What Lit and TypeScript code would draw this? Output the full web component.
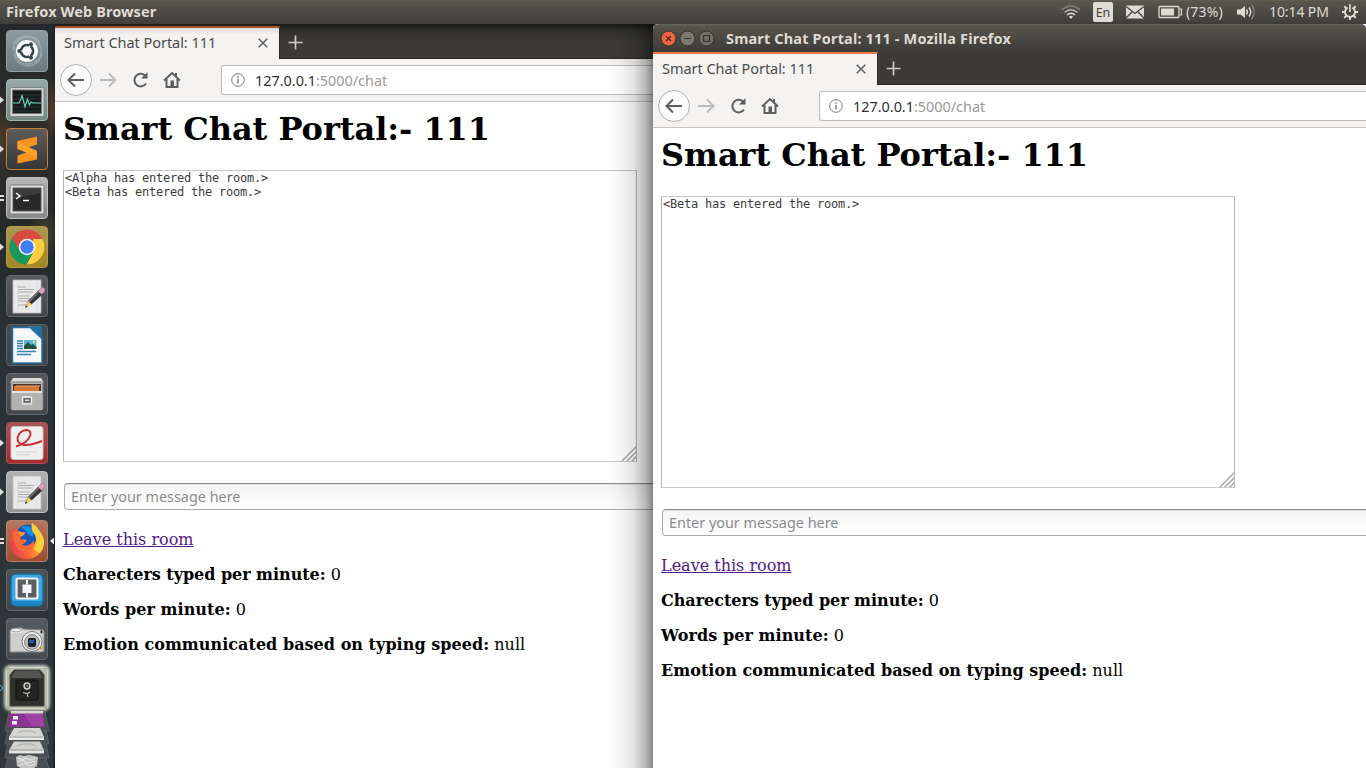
import { LitElement, html, css, svg, nothing } from "lit";
import { customElement, property } from "lit/decorators.js";

type Tile = { name: string; bg: string; edge: string; art: unknown; left?: "tri" | "dash"; right?: boolean };

const document_ = svg`
  <rect x="7" y="5" width="28" height="33" fill="#e9e9ea" stroke="#bdbdbd" stroke-width=".8"/>
  <path d="M12 5v33M31 5v33" stroke="#d5dbe8" stroke-width=".7"/>
  <path d="M12 12h8M12 14.5h16M12 17h15M12 21h12M12 23.500h14M12 26h10M12 30h9" stroke="#a5a5a8" stroke-width=".9"/>
  <path d="M19 32l3-6 11-11 4 4-11 10z" fill="#343434"/>
  <path d="M22 26l11-11 1.500 1.500-11 11z" fill="#686868"/>
  <path d="M19 33l3-7 4 3.500z" fill="#e8cf62"/><path d="M19 33l1.200-2.500 1.300 1.300z" fill="#222"/>
  <path d="M32 16l3-3q2-1 3.400.6t-.2 3.400l-2.500 2.500z" fill="#dda0bf" stroke="#8a6b7b" stroke-width=".5"/>`;

const tiles: Tile[] = [
  { name: "dash", bg: "linear-gradient(#8d9ba1,#6c7b82)", edge: "#93a0a5", art: svg`
    <g fill="none" stroke="#b3bdc1" stroke-opacity=".55" stroke-width="1.300">
      <path d="M7 21Q7 6 22 6q10 1 12 8M8 24q2 11 13 12 12 0 15-13M10 14q3-6 10-7 12 0 15 12 1 10-7 15M9 17q-1 11 7 16 8 3 15-3"/></g>
    <circle cx="21" cy="21" r="11" fill="#f9fafa"/>
    <circle cx="21" cy="21" r="6" fill="none" stroke="#35464e" stroke-width="2.700"/>
    <g stroke="#f9fafa" stroke-width="1.200"><path d="M21 21h-9M21 21l4.500-7.800M21 21l4.500 7.800"/></g><circle cx="21" cy="21" r="4.500" fill="#f9fafa"/>
    <g fill="#35464e"><circle cx="13.200" cy="21" r="2"/><circle cx="25" cy="14.200" r="2"/><circle cx="25" cy="27.800" r="2"/></g>` },
  { name: "monitor", bg: "linear-gradient(#96aaa7,#718883)", edge: "#a2b6b2", left: "tri", art: svg`
    <rect x="4" y="8.500" width="34" height="29" rx="1.500" fill="#d4d6d5" stroke="#808684"/>
    <rect x="6.500" y="11" width="29" height="23.500" fill="#171d1d" stroke="#777"/>
    <path d="M7 16h28M7 20h28M7 24h28M7 28h28M7 32h28" stroke="#354241" stroke-width=".7"/>
    <path d="M7 24h6l2-4 1-4 3 12 2.500-8 2 6 1.500-3 2 1h8" fill="none" stroke="#67d4b4" stroke-width="1.100"/>` },
  { name: "editor", bg: "linear-gradient(#5e5d5c,#343638)", edge: "#c78035", left: "tri", art: svg`
    <path d="M31 8.500v8L20 20l11 3v8.500L11.500 35.500v-8L22 24l-10.500-3v-8z" fill="#f7941e"/>
    <path d="M11.500 13.500v7.500L31 29v-6z" fill="#fba22b"/>` },
  { name: "terminal", bg: "linear-gradient(#b6b6b6,#8a8a8a)", edge: "#bdbdbd", left: "dash", art: svg`
    <rect x="4" y="8" width="34" height="29" rx="1.500" fill="#e2e2e2" stroke="#777"/>
    <rect x="7" y="11" width="28" height="23" fill="#292929" stroke="#555"/>
    <path d="M7 22l28-6v-5H7z" fill="#555" opacity=".45"/>
    <path d="M10 16l4 3-4 3M17 23.500h6" fill="none" stroke="#fff" stroke-width="1.500"/>` },
  { name: "chrome", bg: "linear-gradient(#aa9754,#a28723)", edge: "#b49c44", left: "tri", art: svg`
    <circle cx="21" cy="21" r="17.500" fill="#d84b40"/>
    <path d="M36.500 13A17.500 17.500 0 0 1 20.500 38.500L28 25l-1-12z" fill="#fbcd3f"/>
    <path d="M5.800 12.300A17.500 17.500 0 0 0 20.500 38.500L28 25l-14 0z" fill="#16985b"/>
    <circle cx="21" cy="21" r="8.300" fill="#f4f4f2"/><circle cx="21" cy="21" r="6.700" fill="#407ded"/>` },
  { name: "gedit", bg: "linear-gradient(#585c5f,#44484b)", edge: "#65696c", art: document_ },
  { name: "writer", bg: "linear-gradient(#454d53,#3c4347)", edge: "#5d6467", art: svg`
    <path d="M6.500 3.500H27L36 14v25H6.500z" fill="#f7f8f9" stroke="#2371a6" stroke-width="1.500"/>
    <path d="M22 2.500h14V16z" fill="#3d96c7"/><path d="M23 3l13 12V3z" fill="#236f9f"/>
    <path d="M11 17h6M11 19.500h6M11 22h6M11 24.500h6M11 27.500h19M11 30.500h14" stroke="#3584b4" stroke-width="1.300"/>
    <rect x="18" y="16" width="12.500" height="9" fill="#5db7de"/><path d="M18 22l4-4 3 3 2-1 3.500 3v2H18z" fill="#23513d"/><circle cx="28" cy="18" r="1.200" fill="#f5db51"/>` },
  { name: "files", bg: "linear-gradient(#54585a,#43474a)", edge: "#676b6d", art: svg`
    <path d="M7 5h28l3 5H4z" fill="#deddd9"/><rect x="5" y="9" width="32" height="28" rx="1.500" fill="#b9b9b6" stroke="#767676"/>
    <path d="M7 18v-7h28v7z" fill="#4a3429"/><path d="M8 13h25v5H8z" fill="#d97735"/><path d="M10 13h24" stroke="#f0ae76"/>
    <rect x="6" y="18" width="30" height="19" fill="#b2b2b0"/><path d="M6 18h30v2H6z" fill="#e2e2df"/>
    <rect x="16.500" y="24" width="9" height="7" rx=".5" fill="#888" stroke="#eee" stroke-width="1.300"/><rect x="18.500" y="26" width="5" height="2.500" fill="#ddd" stroke="#4c4c4c" stroke-width=".8"/>` },
  { name: "viewer", bg: "linear-gradient(#a75558,#a52a2e)", edge: "#aa5458", left: "tri", art: svg`
    <rect x="5" y="4.500" width="32" height="33" rx="2.500" fill="#efefee" stroke="#c7c3c3"/>
    <path d="M10 24.500Q22 21 24.500 13q.5-5-4.500-5-7 1-8.500 8-.5 6 6.500 7 7 .5 18-4" fill="none" stroke="#c92e35" stroke-width="1.900"/>
    <path d="M10 30h21M10 32.800h14" stroke="#d1d1d1"/>` },
  { name: "notes", bg: "linear-gradient(#b0b0b0,#939393)", edge: "#bdbdbd", left: "tri", art: document_ },
  { name: "firefox", bg: "linear-gradient(#b37861,#9b4e2d)", edge: "#b58270", left: "dash", right: true, art: svg`
    <defs><linearGradient id="fox" x1="0" y1=".6" x2="1" y2=".4"><stop offset="0" stop-color="#ef3a55"/><stop offset=".45" stop-color="#f9653a"/><stop offset=".75" stop-color="#fc9a2c"/><stop offset="1" stop-color="#fdd83f"/></linearGradient></defs>
    <circle cx="21" cy="22.500" r="16.500" fill="url(#fox)"/>
    <path d="M4.500 22Q4 12 8 7q1 4 4 5.500L20 10v12z" fill="#f24a46"/>
    <path d="M12 9q5-5 11-4.500 8 2 8.500 11-1 11-10 11-8-1-9.500-8z" fill="#1c55b8"/>
    <path d="M15 7.500q8-4 12 3 1 4 0 6-5-1-7-5-1-2-5-4z" fill="#0f8fe0"/>
    <path d="M26 3q5 3 7.500 8 5 6 4.500 13-1 6-4 9l-6-4q4-7 1-14-5-6-3-12z" fill="#fcd03a"/>
    <path d="M7 12q4-2 6-.5 2 1.500 6 1-1 3-4 4-1.500 1.500-.5 3 4-1 6.500 1-1.500 3-5.500 4 4 2.500 8 0 4-2 4.500-5 1.500 8-5.500 11-9 2-13-5-3-6-2.500-13.500z" fill="#fa6a38"/>
    <path d="M12 11q4 1.500 7.500 1.500-1 2.500-4.500 4z" fill="#fc9a34"/>` },
  { name: "brackets", bg: "linear-gradient(#4d5355,#3e4548)", edge: "#626769", art: svg`
    <rect x="5" y="5" width="32" height="32" rx="5" fill="#1e86c6" stroke="#1672a7"/><path d="M6 10q0-4 4-4h22q4 0 4 4v20q0 2-4 2H10q-4 0-4-2z" fill="#3aa8e4"/>
    <rect x="10.500" y="9.500" width="21" height="20" rx="1.500" fill="#5b5f62" stroke="#f0f3f5" stroke-width="2.200"/>
    <path d="M21 11v4.500M21 24v4.500" stroke="#f4f4f4" stroke-width="2"/><rect x="16.500" y="15.500" width="9" height="8.500" fill="#f4f4f4"/>` },
  { name: "camera", bg: "linear-gradient(#555b5e,#454c4f)", edge: "#65696b", art: svg`
    <path d="M4 12h5q5-4 8-1l20 1q1 0 1 2v19l-2 1H4z" fill="#cfd0ce" stroke="#868887"/><path d="M5 14h32" stroke="#f0f0ee"/>
    <ellipse cx="10" cy="12" rx="5" ry="1.800" fill="#ebebe9" stroke="#888" stroke-width=".6"/>
    <circle cx="26" cy="23.500" r="10" fill="#f0f0ef" stroke="#777"/><circle cx="26" cy="24" r="7.500" fill="#b8b9b8" stroke="#888"/>
    <rect x="22" y="20" width="8" height="9" rx="2" fill="#18222e"/><path d="M23 22h5v3h-5z" fill="#2656a5"/>
    <path d="M34 14h3M35.500 12.500v3" stroke="#222"/><rect x="34" y="29" width="2.500" height="2.500" fill="#e49b24"/>` },
  { name: "safe", bg: "#343834", edge: "#d4d8c8", left: "tri", art: svg`
    <rect width="42" height="42" fill="#b7bbad"/><path d="M4 8l4-5h26l4 5v31H4z" fill="#30302d" stroke="#484842"/><path d="M9 4h24l4 7H5z" fill="#55554f"/>
    <rect x="10" y="13" width="22" height="20" rx="2" fill="#242421" stroke="#11110f"/>
    <circle cx="21" cy="19" r="2.900" fill="none" stroke="#d4d4ce" stroke-width="1.500"/><circle cx="21" cy="19" r="1" fill="#999"/>
    <path d="M17 25.500l4 1 3-1.500M21 26l1 4" fill="none" stroke="#bbb" stroke-width="1.200"/>` },
];

@customElement("dock-launcher")
class DockLauncher extends LitElement {
  static styles = css`
    :host { display: flex; flex-direction: column; align-items: center; width: 55px; flex: none; padding-top: 6px; box-sizing: border-box; overflow: hidden;
      background:
        radial-gradient(ellipse 10px 30px at 54px 85px, #8c502880, transparent),
        radial-gradient(ellipse 14px 40px at 2px 115px, #54402bb0, transparent),
        radial-gradient(ellipse 18px 25px at 45px 210px, #544a36a0, transparent),
        linear-gradient(90deg, transparent 53px, #1c2022 54px),
        linear-gradient(#23282b 0, #302c29 120px, #25292a 210px, #2b3235 320px, #30373a 100%); }
    .row { position: relative; width: 55px; height: 42px; flex: none; margin-bottom: 7px; display: flex; justify-content: center; }
    .tile { width: 42px; height: 42px; border-radius: 4px; box-sizing: border-box; overflow: hidden; margin-right: 1px; }
    .tile svg { display: block; margin: -1px; }
    .safe { box-shadow: 0 0 3px 2px #d9ddcce0; }
    .mark { position: absolute; left: 0; top: 16px; }
    .focus { position: absolute; right: 1px; top: 16px; }
    .stack { display: block; flex: none; margin-top: -5px; }
  `;
  render() {
    return html`
      ${tiles.map((t) => html`<div class="row">
        <div class="tile ${t.name}" style="background:${t.bg};border:1px solid ${t.edge}">
          <svg width="42" height="42" viewBox="0 0 42 42">${t.art}</svg>
        </div>
        ${t.left ? html`<svg class="mark" width="5" height="10" viewBox="0 0 5 10">${t.name === "safe"
          ? svg`<path d="M0 2l3 3-3 3" fill="none" stroke="#58b7dc"/>`
          : t.left === "tri" ? svg`<path d="M0 1.500L4 5 0 8.500z" fill="#dedede"/>`
          : svg`<path d="M0 3h4M0 7h4" stroke="#dedede" stroke-width="2"/>`}</svg>` : nothing}
        ${t.right ? html`<svg class="focus" width="5" height="10" viewBox="0 0 5 10"><path d="M5 1.500L1 5l4 3.500z" fill="#e6e6e6"/></svg>` : nothing}
      </div>`)}
      <svg class="stack" width="55" height="58" viewBox="0 0 55 58">
        <g fill="#495053" stroke="#5f6567" stroke-width=".8"><path d="M10 40h34l5 18H5z"/><path d="M9 27h36l4 20H5z"/><path d="M9 14h36l4 19H5z"/><path d="M9 1h36l4 19H5z"/></g>
        <path d="M11 1h32l2 15H8z" fill="#8a3390"/><path d="M11 0h32v2.500H11z" fill="#ded2cf"/><path d="M13 5h5v3.500h-5zM12 10h5v3.500h-5z" fill="#f4eaf5"/><path d="M24 3h19l1 12H32z" fill="#b356b6" opacity=".45"/>
        <path d="M14 17h26l4 9v3H9v-3z" fill="#d6d7d5"/><path d="M17 22l6-2h8l5 2" fill="none" stroke="#aaa"/><path d="M10 26h33" stroke="#a2a4a2"/><path d="M9 28h35" stroke="#efefec" stroke-width="1.500"/>
        <path d="M14 30.500h26l4 9v3H9v-3z" fill="#d0d1cf"/><path d="M17 35l6-2h8l5 2" fill="none" stroke="#aaa"/><path d="M10 39h33" stroke="#9c9e9c"/><path d="M9 41h35" stroke="#ececea" stroke-width="1.500"/>
        <path d="M16 46l4-2 4 1 5-1 5 1 4 1-1 9-3 2H21l-4-2z" fill="#c2c3c1"/><path d="M18 47l4 2 4-2 4 2 5-2M18 51l5-2 4 3 8-2M19 55l6-3 5 3 5-2" fill="none" stroke="#ececeb"/>
      </svg>`;
  }
}

@customElement("top-panel")
class TopPanel extends LitElement {
  static styles = css`
    :host { display: flex; align-items: center; height: 24px; flex: none; padding: 0 8px 0 6px; box-sizing: border-box; color: #dfdbd2;
      background: linear-gradient(#605d50 0, #57544b 2px, #403f3a 23px, #3a3935 24px); font: 14px/24px "Noto Sans", sans-serif; }
    .name { font-weight: 700; flex: 1; font-size: 14.500px; line-height: 22px; padding-bottom: 2px; letter-spacing: .1px; white-space: nowrap; }
    .tray { display: flex; align-items: center; height: 24px; }
    .wifi { margin-right: 12px; }
    .lang { width: 20px; height: 20px; border-radius: 2px; background: #dfdbd2; color: #45433d; font-size: 12.500px; line-height: 21px; text-align: center; margin-right: 13px; }
    .mail { margin-right: 14px; }
    .bat { margin-right: 3px; }
    .pct { width: 51px; font-size: 14px; letter-spacing: .15px; white-space: nowrap; }
    .clock { width: 73px; font-size: 14px; letter-spacing: -.1px; white-space: nowrap; margin-left: 12px; }
    svg { display: block; }
  `;
  render() {
    return html`<span class="name">Firefox Web Browser</span>
      <div class="tray">
        <svg class="wifi" width="20" height="16" viewBox="0 0 20 16" fill="none" stroke="#dfdbd2" stroke-width="1.500">
          <path d="M.8 6q9.200-8 18.400 0" stroke="#85827a"/><path d="M3.500 8.500q6.500-5.500 13 0" stroke="#b9b5ad"/><path d="M6 11q4-3.500 8 0"/><path d="M8 12.500q2-1.500 4 0l-2 2.500z" fill="#dfdbd2" stroke="none"/></svg>
        <span class="lang">En</span>
        <svg class="mail" width="18" height="14" viewBox="0 0 18 14"><rect width="18" height="13" y=".5" fill="#dfdbd2"/><path d="M0 1.500l9 7 9-7M0 13l6-6M18 13l-6-6" fill="none" stroke="#45433d" stroke-width="1.300"/></svg>
        <svg class="bat" width="25" height="14" viewBox="0 0 25 14"><rect x="1" y="1.500" width="20" height="11" rx="1" fill="none" stroke="#dfdbd2" stroke-width="1.300"/><rect x="3" y="3.500" width="13" height="7" fill="#dfdbd2"/><path d="M21.500 4h2v6h-2" fill="none" stroke="#dfdbd2" stroke-width="1.200"/></svg>
        <span class="pct">(73%)</span>
        <svg width="20" height="18" viewBox="0 0 20 18"><path d="M0 6.500h3.500L8 3v12l-4.500-3.500H0z" fill="#dfdbd2"/><g fill="none" stroke="#dfdbd2" stroke-width="1.500"><path d="M9.500 6.500q1.800 2.500 0 5M12 4.500q3.500 4.500 0 9"/><path d="M14.500 2q5.500 7 0 14" stroke="#7f7c74"/></g></svg>
        <span class="clock">10:14 PM</span>
        <svg width="16" height="16" viewBox="0 0 16 16" fill="none" stroke="#dfdbd2"><path d="M5.500 3.600a5 5 0 1 0 5 0" stroke-width="1.800"/><path d="M8 0v8" stroke-width="1.700"/><path d="M0 8h3M13 8h3M8 13v3M2.300 2.300l2 2M13.700 2.300l-2 2M2.300 13.700l2-2M13.700 13.700l-2-2" stroke-width="2"/></svg>
      </div>`;
  }
}

@customElement("browser-window")
class BrowserWindow extends LitElement {
  @property({ type: Boolean, reflect: true }) framed = false;
  @property({ attribute: false }) log: string[] = [];
  static styles = css`
    :host { display: flex; flex-direction: column; background: #fff; font-family: "Noto Sans", sans-serif; overflow: hidden; }
    svg { display: block; flex: none; }
    .title { height: 28px; flex: none; display: flex; align-items: center; padding-left: 7px; box-sizing: border-box; background: linear-gradient(#6a675c 0, #57544b 2px, #3c3b37 28px); color: #dfdbd2; border-radius: 5px 5px 0 0; }
    .title b { font-size: 14.500px; margin-left: 11px; white-space: nowrap; letter-spacing: .16px; }
    .tabs { height: 33px; flex: none; display: flex; background: #3b3a36; }
    :host(:not([framed])) .tabs { padding-top: 2px; background: linear-gradient(#191916, #302f2b 7px, #3b3a36 17px); }
    .tab { width: 225px; box-sizing: border-box; border-top: 2px solid #f07746; background: #f4f3f2; display: flex; align-items: center; padding: 0 11px 0 9px; color: #4c4c4c; border-right: 1px solid #282724; }
    :host(:not([framed])) .tab { border-top-color: #a8532f; background: linear-gradient(#dcdbda, #f4f3f2 7px); }
    .tab span { flex: 1; font-size: 14.500px; letter-spacing: -.04px; line-height: 20px; padding-bottom: 4px; white-space: nowrap; }
    .tab svg { margin-bottom: 1px; }
    .rest { flex: 1; display: flex; align-items: center; padding-left: 8px; border-bottom: 1px solid #282724; }
    .nav { height: 43px; flex: none; box-sizing: border-box; border-bottom: 1px solid #c5c4c3; background: #f4f3f2; display: flex; align-items: center; padding-left: 5px; }
    .url { flex: 1; height: 30px; box-sizing: border-box; border: 1px solid #bebdbc; border-right: 0; border-radius: 3px 0 0 3px; background: #fff; margin-left: 37px; display: flex; align-items: center; padding-left: 9px; font-size: 14.400px; color: #999; white-space: nowrap; }
    .url svg { margin-right: 10px; }
    .url b { font-weight: 400; color: #303030; }
    .page { flex: 1; padding: 8px 0 0 8px; font: 16px/19px "DejaVu Serif", serif; color: #000; white-space: nowrap; }
    h1 { font-size: 32px; line-height: 38px; margin: 0 0 22px; letter-spacing: -.04px; }
    .log { width: 574px; height: 292px; box-sizing: border-box; border: 1px solid #b6b6b3; border-bottom-color: #ccc; border-top-color: #c6c6c3; padding: 0 1px 1px; font: 12px/14px "DejaVu Sans Mono", monospace; letter-spacing: -.224px; color: #3c3c3c; display: flex; flex-direction: column; }
    .grip { margin: auto -1px -1px auto; }
    .msg { margin: 21px 0 0; height: 27px; box-sizing: border-box; border: 1px solid #aaa; border-top-color: #8c8c8c; border-right: 0; border-radius: 4px 0 0 4px; background: linear-gradient(#f4f4f4, #fff); box-shadow: inset 0 1px 0 #e2e2e2; padding-left: 6px; margin-left: 1px; font: 14.400px/25px "Noto Sans", sans-serif; color: #8c8c8c; }
    .link { display: block; color: #551a8b; text-decoration: underline; margin-top: 20px; }
    p { margin: 16px 0 0; }
    .cpm { letter-spacing: -.035px; }
    .wpm { letter-spacing: .06px; }
    .mood { letter-spacing: .035px; }
  `;
  render() {
    return html`
      ${this.framed ? html`<div class="title">
        <svg width="55" height="17" viewBox="0 0 55 17">
          <circle cx="8.500" cy="8.500" r="7.500" fill="#ee6440" stroke="#30302b"/><path d="M6 6l5 5M11 6l-5 5" stroke="#51291c" stroke-width="1.200"/>
          <circle cx="27.500" cy="8.500" r="7.500" fill="#7b786d" stroke="#30302b"/><path d="M24 8.500h7" stroke="#35342f" stroke-width="1.200"/>
          <circle cx="46.500" cy="8.500" r="7.500" fill="#737066" stroke="#30302b"/><rect x="43.500" y="5.500" width="6" height="6" fill="none" stroke="#35342f" stroke-width="1.200"/>
        </svg><b>Smart Chat Portal: 111 - Mozilla Firefox</b></div>` : nothing}
      <div class="tabs"><div class="tab"><span>Smart Chat Portal: 111</span>
        <svg width="10" height="10" viewBox="0 0 10 10"><path d="M.7.7l8.600 8.600M9.300.7L.7 9.300" stroke="#5d5d5d" stroke-width="1.500"/></svg></div>
        <div class="rest"><svg width="15" height="15" viewBox="0 0 15 15"><path d="M7.500.5v14M.5 7.500h14" stroke="#cfccc5" stroke-width="1.700"/></svg></div></div>
      <div class="nav">
        <svg width="124" height="34" viewBox="0 0 124 34" fill="none" stroke="#5e5e5e" stroke-width="2">
          <circle cx="16" cy="17" r="15.500" fill="#fcfcfc" stroke="#b0b0b0" stroke-width="1"/>
          <path d="M24 17H9.500M15 10.500L8.500 17l6.500 6.500"/>
          <path d="M40 17h14.500M49 10.500l6.500 6.500-6.500 6.500" stroke="#bcbbbb"/>
          <path d="M86 20.500a6.300 6.300 0 1 1-1-8"/><path d="M87.500 9v6.500H81z" fill="#5e5e5e" stroke="none"/>
          <path d="M104 17.500l8-7.500 8 7.500M106.500 16v8h11v-8M116 10v4"/><rect x="110.500" y="17.500" width="3.500" height="6" fill="#5e5e5e" stroke="none"/>
        </svg>
        <div class="url"><svg width="14" height="14" viewBox="0 0 14 14"><circle cx="7" cy="7" r="6.300" fill="none" stroke="#777"/><path d="M7 6v4.500M7 3.200v1.500" stroke="#777" stroke-width="1.500"/></svg><b>127.0.0.1</b>:5000/chat</div>
      </div>
      <div class="page">
        <h1>Smart Chat Portal:- 111</h1>
        <div class="log">${this.log.map((l) => html`<span>${l}</span>`)}
          <svg class="grip" width="15" height="15" viewBox="0 0 15 15"><path d="M.5 15.500L15.500.5M5.500 15.500l10-10M10.500 15.500l5-5" stroke="#aaa" stroke-width="1.500"/></svg></div>
        <div class="msg">Enter your message here</div>
        <a class="link"><span>Leave this room</span></a>
        <p class="cpm"><b>Charecters typed per minute:</b> 0</p>
        <p class="wpm"><b>Words per minute:</b> 0</p>
        <p class="mood"><b>Emotion communicated based on typing speed:</b> null</p>
      </div>`;
  }
}

@customElement("app-root")
class AppRoot extends LitElement {
  static styles = css`
    :host { display: flex; flex-direction: column; position: relative; width: 1366px; height: 768px; overflow: hidden; }
    .desk { display: flex; flex: 1; min-height: 0; }
    .back { flex: 1; }
    .front { position: absolute; left: 653px; top: 24px; width: 713px; height: 744px; border-radius: 5px 0 0 0; }
    .shade { position: absolute; left: 605px; top: 24px; width: 48px; height: 744px; background: linear-gradient(90deg, transparent, #00000008 30%, #0000001c 60%, #00000048 85%, #00000078); }
  `;
  render() {
    return html`<top-panel></top-panel>
      <div class="desk"><dock-launcher></dock-launcher>
        <browser-window class="back" .log=${["<Alpha has entered the room.>", "<Beta has entered the room.>"]}></browser-window></div>
      <div class="shade"></div>
      <browser-window class="front" framed .log=${["<Beta has entered the room.>"]}></browser-window>`;
  }
}
